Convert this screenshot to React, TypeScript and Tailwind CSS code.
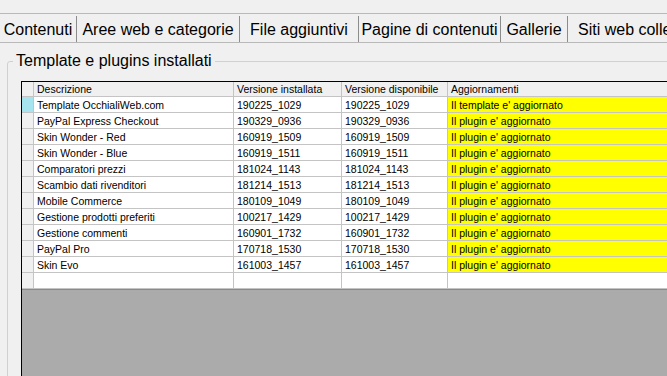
const tabs = [
  { label: "Contenuti", w: "w-[77px]" },
  { label: "Aree web e categorie", w: "w-[163px]" },
  { label: "File aggiuntivi", w: "w-[119px]" },
  { label: "Pagine di contenuti", w: "w-[142px]" },
  { label: "Gallerie", w: "w-[67px]" },
];

const rows = [
  ["Template OcchialiWeb.com", "190225_1029", "190225_1029", "Il template e' aggiornato"],
  ["PayPal Express Checkout", "190329_0936", "190329_0936", "Il plugin e' aggiornato"],
  ["Skin Wonder - Red", "160919_1509", "160919_1509", "Il plugin e' aggiornato"],
  ["Skin Wonder - Blue", "160919_1511", "160919_1511", "Il plugin e' aggiornato"],
  ["Comparatori prezzi", "181024_1143", "181024_1143", "Il plugin e' aggiornato"],
  ["Scambio dati rivenditori", "181214_1513", "181214_1513", "Il plugin e' aggiornato"],
  ["Mobile Commerce", "180109_1049", "180109_1049", "Il plugin e' aggiornato"],
  ["Gestione prodotti preferiti", "100217_1429", "100217_1429", "Il plugin e' aggiornato"],
  ["Gestione commenti", "160901_1732", "160901_1732", "Il plugin e' aggiornato"],
  ["PayPal Pro", "170718_1530", "170718_1530", "Il plugin e' aggiornato"],
  ["Skin Evo", "161003_1457", "161003_1457", "Il plugin e' aggiornato"],
];

const cell = "h-full border-r border-[#c4c4c4] pl-[3px] whitespace-nowrap overflow-hidden";

function Row({ data, first, empty }: { data: string[]; first?: boolean; empty?: boolean }) {
  return (
    <div className="flex h-[16px] border-b border-[#c4c4c4] leading-[16px]">
      <div className={`w-[12px] shrink-0 h-full border-r border-[#c4c4c4] ${first ? "bg-[#a6e5ef]" : "bg-[#f0f0f0]"}`} />
      <div className={`w-[200px] shrink-0 bg-white ${cell}`}>{data[0]}</div>
      <div className={`w-[108px] shrink-0 bg-white ${cell}`}>{data[1]}</div>
      <div className={`w-[106px] shrink-0 bg-white ${cell}`}>{data[2]}</div>
      <div className={`flex-1 ${empty ? "bg-white" : "bg-[#ffff00]"} ${cell}`}>{data[3]}</div>
    </div>
  );
}

export default function App() {
  return (
    <div className="w-[667px] h-[376px] overflow-hidden bg-[#f0f0f0] text-black font-['Liberation_Sans',Arial,sans-serif]">
      <div className="w-[800px]">
        <div className="h-[14px] border-b border-[#b9b9b9]" />
        <div className="flex h-[29px] items-end border-b border-[#b9b9b9] text-[16px]">
          {tabs.map((t) => (
            <div key={t.label} className={`${t.w} shrink-0 h-[26px] border-r border-[#8c8c8c] text-center whitespace-nowrap leading-[26px] pt-[1px]`}>
              {t.label}
            </div>
          ))}
          <div className="h-[26px] pl-[10px] whitespace-nowrap leading-[26px] pt-[1px]">Siti web collegati</div>
        </div>

        <fieldset className="ml-[7px] mt-[9px] w-[760px] h-[400px] border border-[#d0d0d0] rounded-[3px] p-0">
          <legend className="ml-[5px] px-[3px] text-[16px] leading-[18px]">Template e plugins installati</legend>
          <div className="ml-[13px] mt-[11px] h-[330px] border-l border-t border-black bg-[#ababab] text-[10.5px] flex flex-col">
            <div className="flex h-[15px] border-b border-[#c4c4c4] leading-[14px] bg-[#f0f0f0]">
              <div className="w-[12px] shrink-0 h-full border-r border-[#c4c4c4]" />
              <div className={`w-[200px] shrink-0 ${cell}`}>Descrizione</div>
              <div className={`w-[108px] shrink-0 ${cell}`}>Versione installata</div>
              <div className={`w-[106px] shrink-0 ${cell}`}>Versione disponibile</div>
              <div className={`flex-1 ${cell}`}>Aggiornamenti</div>
            </div>
            {rows.map((r, i) => (
              <Row key={r[0]} data={r} first={i === 0} />
            ))}
            <Row data={["", "", "", ""]} empty />
            <div className="flex-1 border-t border-[#8a8a8a]" />
          </div>
        </fieldset>
      </div>
    </div>
  );
}
